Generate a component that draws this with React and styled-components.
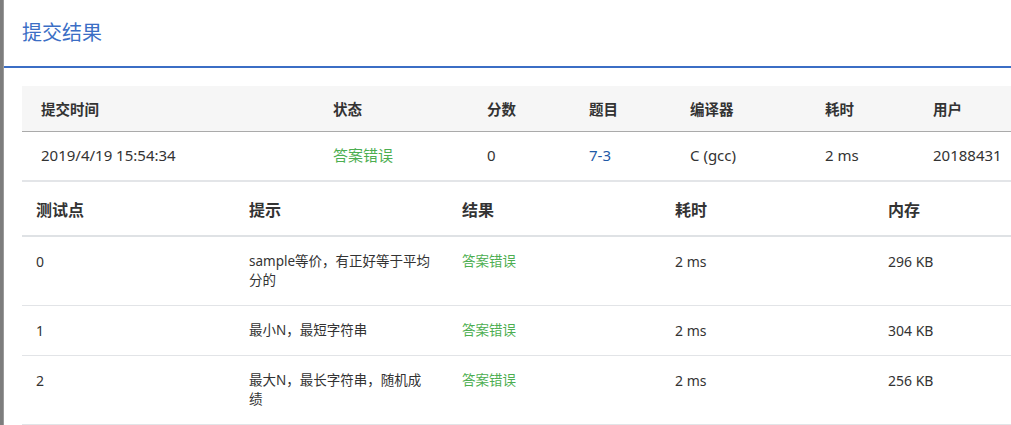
import React from 'react'
import styled, { createGlobalStyle } from 'styled-components'

const Global = createGlobalStyle`
  html, body {
    margin: 0;
    padding: 0;
    background: #fff;
    overflow: hidden;
  }
  body {
    font-family: "Noto Sans", "Noto Sans CJK SC", sans-serif;
    color: #333;
  }
`

const Page = styled.div`
  display: flex;
  width: 1011px;
  height: 425px;
  overflow: hidden;
`

const Backdrop = styled.div`
  width: 4px;
  flex: none;
  background: #7d7d7d;
  border-right: 1px solid #9a9a9a;
  box-sizing: border-box;
`

const Modal = styled.div`
  flex: 1;
  min-width: 0;
  background: #fff;
`

const Header = styled.div`
  height: 68px;
  box-sizing: border-box;
  padding: 20px 0 0 18px;
  border-bottom: 2px solid #3b6ec5;

  h3 {
    margin: 0;
    font-size: 20px;
    font-weight: 400;
    color: #3b6ec5;
    line-height: 26px;
  }
`

const Body = styled.div`
  padding: 18px 0 0 18px;
  width: 1100px;
`

const Table = styled.table`
  border-collapse: collapse;
  table-layout: fixed;
  width: ${p => p.$width}px;
`

const Th = styled.th`
  text-align: left;
  font-weight: 700;
  color: #333;
  font-size: ${p => p.$size || 14}px;
  padding: 0 0 0 ${p => p.$pad || 0}px;
`

const SumHead = styled.tr`
  background: #f6f6f6;
  height: 45px;
  border-bottom: 1px solid #aaa;
`

const SumRow = styled.tr`
  height: 50px;
  border-bottom: 2px solid #e3e5e8;
`

const Td = styled.td`
  font-size: ${p => p.$size || 15}px;
  color: ${p => p.$color || '#333'};
  padding: 0 0 0 ${p => p.$pad || 0}px;
  line-height: 19px;
`

const CaseHead = styled.tr`
  height: 54px;
  border-bottom: 2px solid #dfe2e5;
`

const CaseRow = styled.tr`
  border-bottom: 1px solid #e2e4e7;

  td {
    vertical-align: top;
    padding-top: 15px;
    padding-bottom: 15px;
  }
`

const Hint = styled.div`
  width: 185px;
`

const summaryCols = [
  { label: '提交时间', w: 311 },
  { label: '状态', w: 154 },
  { label: '分数', w: 102 },
  { label: '题目', w: 101 },
  { label: '编译器', w: 135 },
  { label: '耗时', w: 108 },
  { label: '用户', w: 120 },
]

const caseCols = ['测试点', '提示', '结果', '耗时', '内存']

const cases = [
  { id: '0', hint: 'sample等价，有正好等于平均分的', time: '2 ms', mem: '296 KB' },
  { id: '1', hint: '最小N，最短字符串', time: '2 ms', mem: '304 KB' },
  { id: '2', hint: '最大N，最长字符串，随机成绩', time: '2 ms', mem: '256 KB' },
]

export default function App() {
  return (
    <Page>
      <Global />
      <Backdrop />
      <Modal>
        <Header>
          <h3>提交结果</h3>
        </Header>
        <Body>
          <Table $width={1031}>
            <colgroup>
              {summaryCols.map(c => <col key={c.label} style={{ width: c.w }} />)}
            </colgroup>
            <thead>
              <SumHead>
                <Th $pad={19} $size={14.5}>提交时间</Th>
                {summaryCols.slice(1).map(c => <Th key={c.label} $size={14.5}>{c.label}</Th>)}
              </SumHead>
            </thead>
            <tbody>
              <SumRow>
                <Td $pad={19}>2019/4/19 15:54:34</Td>
                <Td $color="#4cae50">答案错误</Td>
                <Td>0</Td>
                <Td $color="#1f5aa6">7-3</Td>
                <Td>C (gcc)</Td>
                <Td>2 ms</Td>
                <Td>20188431</Td>
              </SumRow>
            </tbody>
          </Table>
          <Table $width={1065}>
            <colgroup>
              {caseCols.map(c => <col key={c} style={{ width: 213 }} />)}
            </colgroup>
            <thead>
              <CaseHead>
                {caseCols.map(c => <Th key={c} $pad={14} $size={16}>{c}</Th>)}
              </CaseHead>
            </thead>
            <tbody>
              {cases.map(c => (
                <CaseRow key={c.id}>
                  <Td $pad={14} $size={14}>{c.id}</Td>
                  <Td $pad={14} $size={13.5}><Hint>{c.hint}</Hint></Td>
                  <Td $pad={14} $size={13.5} $color="#4cae50">答案错误</Td>
                  <Td $pad={14} $size={14}>{c.time}</Td>
                  <Td $pad={14} $size={14}>{c.mem}</Td>
                </CaseRow>
              ))}
            </tbody>
          </Table>
        </Body>
      </Modal>
    </Page>
  )
}
